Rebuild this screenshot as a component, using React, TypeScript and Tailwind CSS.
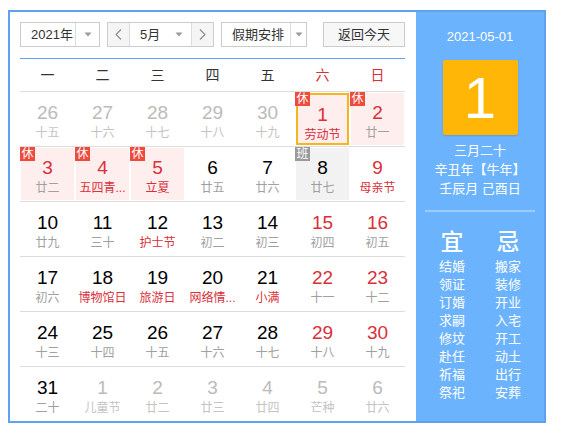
import React from 'react';

type Day = {
  n: number;
  l: string;
  other?: boolean;
  red?: boolean;
  fest?: boolean;
  badge?: '休' | '班';
  sel?: boolean;
};

const rows: Day[][] = [
  [
    { n: 26, l: '十五', other: true },
    { n: 27, l: '十六', other: true },
    { n: 28, l: '十七', other: true },
    { n: 29, l: '十八', other: true },
    { n: 30, l: '十九', other: true },
    { n: 1, l: '劳动节', red: true, fest: true, badge: '休', sel: true },
    { n: 2, l: '廿一', red: true, badge: '休' },
  ],
  [
    { n: 3, l: '廿二', red: true, badge: '休' },
    { n: 4, l: '五四青...', red: true, fest: true, badge: '休' },
    { n: 5, l: '立夏', red: true, fest: true, badge: '休' },
    { n: 6, l: '廿五' },
    { n: 7, l: '廿六' },
    { n: 8, l: '廿七', badge: '班' },
    { n: 9, l: '母亲节', red: true, fest: true },
  ],
  [
    { n: 10, l: '廿九' },
    { n: 11, l: '三十' },
    { n: 12, l: '护士节', fest: true },
    { n: 13, l: '初二' },
    { n: 14, l: '初三' },
    { n: 15, l: '初四', red: true },
    { n: 16, l: '初五', red: true },
  ],
  [
    { n: 17, l: '初六' },
    { n: 18, l: '博物馆日', fest: true },
    { n: 19, l: '旅游日', fest: true },
    { n: 20, l: '网络情...', fest: true },
    { n: 21, l: '小满', fest: true },
    { n: 22, l: '十一', red: true },
    { n: 23, l: '十二', red: true },
  ],
  [
    { n: 24, l: '十三' },
    { n: 25, l: '十四' },
    { n: 26, l: '十五' },
    { n: 27, l: '十六' },
    { n: 28, l: '十七' },
    { n: 29, l: '十八', red: true },
    { n: 30, l: '十九', red: true },
  ],
  [
    { n: 31, l: '二十' },
    { n: 1, l: '儿童节', other: true },
    { n: 2, l: '廿二', other: true },
    { n: 3, l: '廿三', other: true },
    { n: 4, l: '廿四', other: true },
    { n: 5, l: '芒种', other: true },
    { n: 6, l: '廿六', other: true },
  ],
];

const yi = ['结婚', '领证', '订婚', '求嗣', '修坟', '赴任', '祈福', '祭祀'];
const ji = ['搬家', '装修', '开业', '入宅', '开工', '动土', '出行', '安葬'];

function Caret() {
  return (
    <svg width="8" height="5" viewBox="0 0 8 5">
      <path d="M0.5 0.5 L7.5 0.5 L4 4.5 Z" fill="#9a9a9a" />
    </svg>
  );
}

function Chevron({ dir }: { dir: 'l' | 'r' }) {
  return (
    <svg width="7" height="11" viewBox="0 0 7 11">
      <polyline
        points={dir === 'l' ? '6,0.5 1,5.5 6,10.5' : '1,0.5 6,5.5 1,10.5'}
        fill="none"
        stroke="#8a8a8a"
        strokeWidth="1.1"
      />
    </svg>
  );
}

function Cell({ d }: { d: Day }) {
  const bg = d.badge === '休' ? 'bg-[#ffeeee]' : d.badge === '班' ? 'bg-[#f2f2f2]' : '';
  const numColor = d.other ? 'text-[#bbbbbb]' : d.red ? 'text-[#d9303a]' : 'text-black';
  const lunarColor = d.other ? 'text-[#c4c4c4]' : d.fest ? 'text-[#d9303a]' : 'text-[#a0a0a0]';
  return (
    <div className="relative h-full p-[1px]">
      <div
        className={`h-full flex flex-col items-center pt-[9px] ${bg} ${
          d.sel ? 'border-2 border-[#f5b51d] pt-[7px]' : ''
        }`}
      >
        <div className={`text-[19px] leading-[22px] ${numColor}`}>{d.n}</div>
        <div className={`text-[12px] leading-[16px] mt-[1px] whitespace-nowrap ${lunarColor}`}>{d.l}</div>
      </div>
      {d.badge && (
        <div
          className={`absolute left-0 top-0 w-[15px] h-[14px] flex items-center justify-center text-white text-[12px] leading-none ${
            d.badge === '休' ? 'bg-[#ee4a3e]' : 'bg-[#9a9a9a]'
          }`}
        >
          {d.badge}
        </div>
      )}
    </div>
  );
}

export default function App() {
  return (
    <div className="w-[562px] h-[433px] bg-white pl-[8px] pt-[10px] font-[Liberation_Sans,Noto_Sans_CJK_SC,sans-serif]">
      <div className="w-[538px] h-[413px] border-2 border-[#5ea1ee] flex overflow-hidden">
        {/* left: calendar */}
        <div className="w-[406px] pl-[10px] pr-[11px]">
          <div className="pt-[10px] pb-[11px] border-b border-[#5ea1ee] flex items-center text-[13px] text-[#333]">
            <div className="w-[80px] h-[25px] border border-[#cccccc] flex">
              <div className="flex-1 flex items-center pl-[10px]">2021年</div>
              <div className="w-[24px] border-l border-[#dddddd] flex items-center justify-center">
                <Caret />
              </div>
            </div>
            <div className="ml-[7px] w-[107px] h-[25px] border border-[#cccccc] flex">
              <div className="w-[22px] bg-[#f5f5f5] flex items-center justify-center border-r border-[#dddddd]">
                <Chevron dir="l" />
              </div>
              <div className="flex-1 flex items-center pl-[10px] pr-[8px] justify-between">
                <span>5月</span>
                <Caret />
              </div>
              <div className="w-[22px] bg-[#f5f5f5] flex items-center justify-center border-l border-[#dddddd]">
                <Chevron dir="r" />
              </div>
            </div>
            <div className="ml-[7px] w-[86px] h-[25px] border border-[#cccccc] flex">
              <div className="flex-1 flex items-center pl-[10px]">假期安排</div>
              <div className="w-[16px] border-l border-[#dddddd] flex items-center justify-center">
                <Caret />
              </div>
            </div>
            <button className="ml-[16px] w-[82px] h-[25px] border border-[#cccccc] bg-[#f7f7f7] flex items-center justify-center text-[13px] text-[#333]">
              返回今天
            </button>
          </div>
          <div className="grid grid-cols-7 h-[33px] items-center text-[14px] text-center border-b border-[#dddddd]">
            {['一', '二', '三', '四', '五'].map(w => (
              <div key={w} className="text-[#333]">{w}</div>
            ))}
            <div className="text-[#d9303a]">六</div>
            <div className="text-[#d9303a]">日</div>
          </div>
          {rows.map((r, i) => (
            <div
              key={i}
              className={`grid grid-cols-7 h-[55px] ${i < rows.length - 1 ? 'border-b border-[#dddddd]' : ''}`}
            >
              {r.map((d, j) => (
                <Cell key={j} d={d} />
              ))}
            </div>
          ))}
        </div>

        {/* right: detail panel */}
        <div className="flex-1 bg-[#6cb3fd] flex flex-col items-center text-white">
          <div className="mt-[16px] text-[13px] leading-[18px]">2021-05-01</div>
          <div className="mt-[14px] w-[75px] h-[75px] bg-[#ffb606] rounded-[2px] shadow-[0_1px_2px_rgba(0,0,0,0.15)] flex items-center justify-center text-[58px] leading-none">
            1
          </div>
          <div className="mt-[6px] text-[13px] leading-[19px] text-center">
            <div>三月二十</div>
            <div>辛丑年【牛年】</div>
            <div>壬辰月 己酉日</div>
          </div>
          <div className="mt-[12px] w-[110px] h-[2px] bg-[#9fcbf7]" />
          <div className="mt-[16px] flex gap-[30px]">
            <div className="flex flex-col items-center">
              <div className="text-[23px] leading-[28px] font-medium">宜</div>
              <div className="mt-[2px] text-[13px] leading-[18px] text-center">
                {yi.map(t => (
                  <div key={t}>{t}</div>
                ))}
              </div>
            </div>
            <div className="flex flex-col items-center">
              <div className="text-[23px] leading-[28px] font-medium">忌</div>
              <div className="mt-[2px] text-[13px] leading-[18px] text-center">
                {ji.map(t => (
                  <div key={t}>{t}</div>
                ))}
              </div>
            </div>
          </div>
        </div>
      </div>
    </div>
  );
}
